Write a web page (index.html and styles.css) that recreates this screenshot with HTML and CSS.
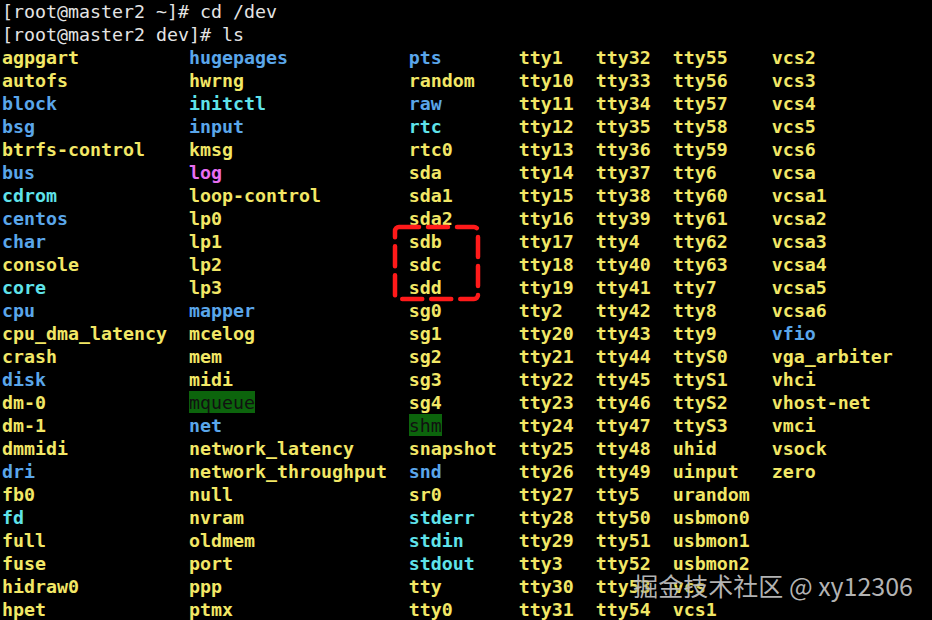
FILE: index.html
```html
<!DOCTYPE html>
<html>
<head>
<meta charset="utf-8">
<link rel="stylesheet" href="styles.css">
</head>
<body>
<div class="term">
  <div class="line prompt">[root@master2 ~]# cd /dev</div>
  <div class="line prompt">[root@master2 dev]# ls</div>
  <div class="ls">
    <span class="y">agpgart</span><span class="y">autofs</span><span class="b">block</span><span class="b">bsg</span><span class="y">btrfs-control</span><span class="b">bus</span><span class="c">cdrom</span><span class="b">centos</span><span class="b">char</span><span class="y">console</span><span class="c">core</span><span class="b">cpu</span><span class="y">cpu_dma_latency</span><span class="y">crash</span><span class="b">disk</span><span class="y">dm-0</span><span class="y">dm-1</span><span class="y">dmmidi</span><span class="b">dri</span><span class="y">fb0</span><span class="c">fd</span><span class="y">full</span><span class="y">fuse</span><span class="y">hidraw0</span><span class="y">hpet</span>
    <span class="b">hugepages</span><span class="y">hwrng</span><span class="c">initctl</span><span class="b">input</span><span class="y">kmsg</span><span class="m">log</span><span class="y">loop-control</span><span class="y">lp0</span><span class="y">lp1</span><span class="y">lp2</span><span class="y">lp3</span><span class="b">mapper</span><span class="y">mcelog</span><span class="y">mem</span><span class="y">midi</span><span><span class="g">mqueue</span></span><span class="b">net</span><span class="y">network_latency</span><span class="y">network_throughput</span><span class="y">null</span><span class="y">nvram</span><span class="y">oldmem</span><span class="y">port</span><span class="y">ppp</span><span class="y">ptmx</span>
    <span class="b">pts</span><span class="y">random</span><span class="b">raw</span><span class="c">rtc</span><span class="y">rtc0</span><span class="y">sda</span><span class="y">sda1</span><span class="y">sda2</span><span class="y">sdb</span><span class="y">sdc</span><span class="y">sdd</span><span class="y">sg0</span><span class="y">sg1</span><span class="y">sg2</span><span class="y">sg3</span><span class="y">sg4</span><span><span class="g">shm</span></span><span class="y">snapshot</span><span class="b">snd</span><span class="y">sr0</span><span class="c">stderr</span><span class="c">stdin</span><span class="c">stdout</span><span class="y">tty</span><span class="y">tty0</span>
    <span class="y">tty1</span><span class="y">tty10</span><span class="y">tty11</span><span class="y">tty12</span><span class="y">tty13</span><span class="y">tty14</span><span class="y">tty15</span><span class="y">tty16</span><span class="y">tty17</span><span class="y">tty18</span><span class="y">tty19</span><span class="y">tty2</span><span class="y">tty20</span><span class="y">tty21</span><span class="y">tty22</span><span class="y">tty23</span><span class="y">tty24</span><span class="y">tty25</span><span class="y">tty26</span><span class="y">tty27</span><span class="y">tty28</span><span class="y">tty29</span><span class="y">tty3</span><span class="y">tty30</span><span class="y">tty31</span>
    <span class="y">tty32</span><span class="y">tty33</span><span class="y">tty34</span><span class="y">tty35</span><span class="y">tty36</span><span class="y">tty37</span><span class="y">tty38</span><span class="y">tty39</span><span class="y">tty4</span><span class="y">tty40</span><span class="y">tty41</span><span class="y">tty42</span><span class="y">tty43</span><span class="y">tty44</span><span class="y">tty45</span><span class="y">tty46</span><span class="y">tty47</span><span class="y">tty48</span><span class="y">tty49</span><span class="y">tty5</span><span class="y">tty50</span><span class="y">tty51</span><span class="y">tty52</span><span class="y">tty53</span><span class="y">tty54</span>
    <span class="y">tty55</span><span class="y">tty56</span><span class="y">tty57</span><span class="y">tty58</span><span class="y">tty59</span><span class="y">tty6</span><span class="y">tty60</span><span class="y">tty61</span><span class="y">tty62</span><span class="y">tty63</span><span class="y">tty7</span><span class="y">tty8</span><span class="y">tty9</span><span class="y">ttyS0</span><span class="y">ttyS1</span><span class="y">ttyS2</span><span class="y">ttyS3</span><span class="y">uhid</span><span class="y">uinput</span><span class="y">urandom</span><span class="y">usbmon0</span><span class="y">usbmon1</span><span class="y">usbmon2</span><span class="y">vcs</span><span class="y">vcs1</span>
    <span class="y">vcs2</span><span class="y">vcs3</span><span class="y">vcs4</span><span class="y">vcs5</span><span class="y">vcs6</span><span class="y">vcsa</span><span class="y">vcsa1</span><span class="y">vcsa2</span><span class="y">vcsa3</span><span class="y">vcsa4</span><span class="y">vcsa5</span><span class="y">vcsa6</span><span class="b">vfio</span><span class="y">vga_arbiter</span><span class="y">vhci</span><span class="y">vhost-net</span><span class="y">vmci</span><span class="y">vsock</span><span class="y">zero</span>
  </div>
  <svg class="mark" width="92" height="82" viewBox="0 0 92 82">
    <rect x="3" y="3" width="83" height="72" rx="4" ry="4" fill="none" stroke="#ff1a1a" stroke-width="4.5" stroke-dasharray="20 9" stroke-linecap="round"/>
  </svg>
  <div class="watermark">掘金技术社区 @ xy12306</div>
</div>
</body>
</html>
```
FILE: styles.css
```css
html, body {
  margin: 0;
  padding: 0;
  background: #000;
  overflow: hidden;
}
.term {
  position: relative;
  width: 932px;
  height: 620px;
  overflow: hidden;
  background: #000;
  padding-left: 2px;
  box-sizing: border-box;
  font-family: "DejaVu Sans Mono", monospace;
  font-size: 18.27px;
  line-height: 23px;
}
.line {
  height: 23px;
  white-space: pre;
}
.prompt {
  color: #e4e4e4;
}
.ls {
  display: grid;
  grid-auto-flow: column;
  grid-template-rows: repeat(25, 23px);
  grid-template-columns: 17ch 20ch 10ch 7ch 7ch 9ch auto;
  font-weight: bold;
  white-space: nowrap;
}
.y { color: #f2e766; }
.b { color: #5aa6ea; }
.c { color: #5fe3ea; }
.m { color: #e86ef0; }
.g {
  display: inline-block;
  background: #0c640c;
  color: #111;
  font-weight: normal;
  height: 22px;
  line-height: 23px;
}
.mark {
  position: absolute;
  left: 392px;
  top: 224px;
}
.watermark {
  position: absolute;
  right: 19px;
  top: 568px;
  font-family: "Noto Sans CJK SC", "Noto Sans", sans-serif;
  font-size: 25px;
  line-height: 34px;
  color: rgba(205, 205, 205, 0.88);
  text-shadow: 0 0 2px rgba(0, 0, 0, 0.6);
  white-space: nowrap;
}
```
